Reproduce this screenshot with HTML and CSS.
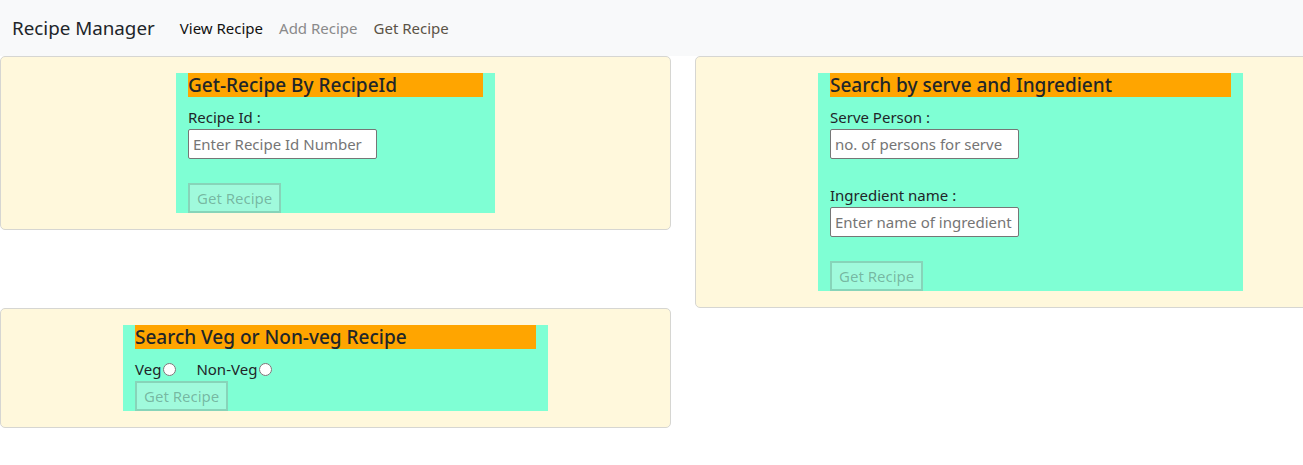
FILE: index.html
```html
<!DOCTYPE html>
<html lang="en">
<head>
<meta charset="utf-8">
<title>Recipe Manager</title>
<link rel="stylesheet" href="styles.css">
</head>
<body>
<nav class="navbar">
  <a class="brand" href="#">Recipe Manager</a>
  <ul class="nav">
    <li><a class="nav-link active" href="#">View Recipe</a></li>
    <li><a class="nav-link muted" href="#">Add Recipe</a></li>
    <li><a class="nav-link hover" href="#">Get Recipe</a></li>
  </ul>
</nav>
<main class="grid">
  <section class="card card-id">
    <div class="panel panel-sm">
      <h5 class="panel-title">Get-Recipe By RecipeId</h5>
      <label class="field-label" for="rid">Recipe Id :</label>
      <input class="field" id="rid" type="text" placeholder="Enter Recipe Id Number">
      <div class="spacer"></div>
      <button class="btn" disabled>Get Recipe</button>
    </div>
  </section>
  <section class="card card-serve">
    <div class="panel panel-lg">
      <h5 class="panel-title">Search by serve and Ingredient</h5>
      <label class="field-label" for="serve">Serve Person :</label>
      <input class="field" id="serve" type="text" placeholder="no. of persons for serve">
      <div class="spacer"></div>
      <label class="field-label" for="ing">Ingredient name :</label>
      <input class="field" id="ing" type="text" placeholder="Enter name of ingredient">
      <div class="spacer"></div>
      <button class="btn" disabled>Get Recipe</button>
    </div>
  </section>
  <section class="card card-veg">
    <div class="panel panel-lg">
      <h5 class="panel-title">Search Veg or Non-veg Recipe</h5>
      <div class="radio-row">
        <label class="radio-item">Veg<input class="radio" type="radio" name="kind"></label>
        <label class="radio-item">Non-Veg<input class="radio" type="radio" name="kind"></label>
      </div>
      <button class="btn" disabled>Get Recipe</button>
    </div>
  </section>
</main>
</body>
</html>
```

FILE: styles.css
```css
* { box-sizing: border-box; }
html, body { margin: 0; padding: 0; }
body {
  font-family: "Noto Sans", "Open Sans", sans-serif;
  font-size: 15px;
  line-height: 24px;
  color: #212529;
  background: #fff;
  overflow-x: hidden;
}
.navbar {
  height: 56px;
  background: #f8f9fa;
  display: flex;
  align-items: center;
  padding: 0 12px;
}
.brand {
  font-size: 18.8px;
  line-height: 30px;
  color: #212529;
  text-decoration: none;
  margin-right: 17px;
}
.nav {
  display: flex;
  list-style: none;
  margin: 0;
  padding: 0;
}
.nav-link {
  display: block;
  padding: 8px;
  font-size: 15px;
  text-decoration: none;
  color: rgba(0,0,0,.55);
}
.nav-link.active { color: #111; }
.nav-link.muted { color: #8a8a8a; }
.nav-link.hover { color: #5b5346; }
.grid {
  display: grid;
  grid-template-columns: 671px 671px;
  column-gap: 24px;
  align-items: start;
}
.card {
  background: #fff8dc;
  border: 1px solid #d6d6d2;
  border-radius: 5px;
  padding: 16px;
  display: flex;
  justify-content: center;
}
.card-veg { grid-column: 1; grid-row: 2; }
.panel {
  background: #7fffd4;
  padding: 0 12px;
}
.panel-sm { width: 319px; }
.panel-lg { width: 425px; }
.panel-title {
  margin: 0 0 8px;
  font-size: 19px;
  line-height: 24px;
  font-weight: 500;
  background: #ffa500;
  color: #212529;
}
.field-label { display: block; line-height: 24px; }
.field {
  display: block;
  width: 189px;
  height: 30px;
  font: inherit;
  font-size: 15px;
  padding: 1px 4px;
  border: 1px solid #767676;
  border-radius: 2px;
  background: #fff;
  color: #212529;
}
.field::placeholder { color: #757575; }
.spacer { height: 24px; }
.btn {
  display: block;
  height: 30px;
  font: inherit;
  font-size: 15px;
  line-height: 24px;
  padding: 1px 7px;
  border: 2px solid rgba(90,140,120,.35);
  background: #a0fadc;
  color: rgba(16,16,16,.3);
}
.radio-row { display: flex; align-items: baseline; height: 24px; }
.radio-item { display: inline-flex; align-items: center; margin-right: 20px; }
.radio {
  width: 13px;
  height: 13px;
  margin: 0 0 0 2px;
  accent-color: #fff;
}
```
